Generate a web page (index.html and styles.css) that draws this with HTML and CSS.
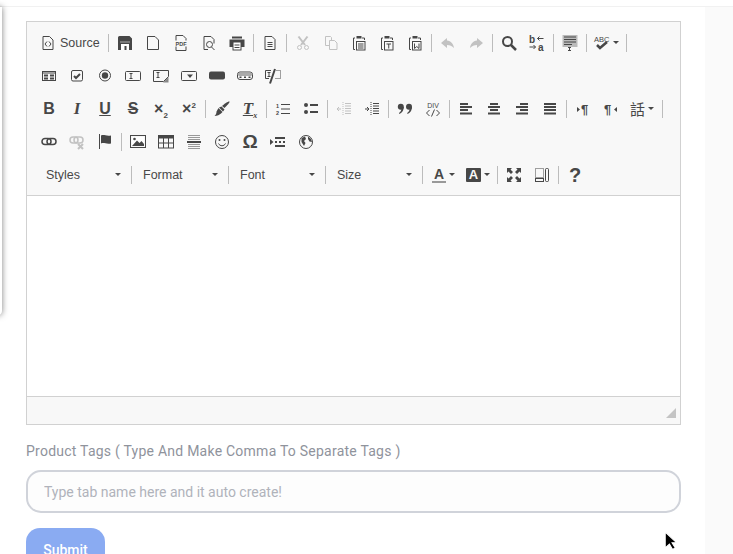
FILE: index.html
```html
<!DOCTYPE html>
<html lang="en">
<head>
  <meta charset="UTF-8">
  <meta name="viewport" content="width=device-width, initial-scale=1.0">
  <title>Add Product</title>
  <link rel="stylesheet" href="styles.css">
</head>
<body>
  <div class="topbar"></div>
  <div class="side-panel"></div>
  <div class="page">
    <main class="content">
      <div class="editor">
        <div class="toolbar">
          <!-- document / clipboard row -->
          <div class="row">
            <span class="btn source">
              <svg class="ic" viewBox="0 0 16 16"><path class="ln" d="M3 1.500h6.500l3.500 3.500v9.500h-10z"/><path class="ln" d="M7 6.500 5 9l2 2.500M9 6.500 11 9l-2 2.500"/></svg>
              <span class="source-label">Source</span>
            </span>
            <i class="sep"></i>
            <span class="btn"><svg class="ic" viewBox="0 0 16 16"><path d="M2.500 1h10l2.500 2.500V15H1V2.500A1.500 1.500 0 0 1 2.500 1z"/><rect x="3" y="6.500" width="10" height="1" fill="#aaa"/><rect x="4" y="9" width="8" height="6" fill="#fff"/><rect x="7.500" y="11" width="2" height="4"/></svg></span>
            <span class="btn"><svg class="ic" viewBox="0 0 16 16"><path class="ln" d="M2.500 1.500h7.500l3.500 3.500v9.500h-11z"/></svg></span>
            <span class="btn"><svg class="ic" viewBox="0 0 16 16"><path class="ln" d="M3 .5h7l3 3v12h-10z"/><rect x="0" y="5.500" width="16" height="6" fill="#f8f8f8"/><text class="tiny" x="8" y="10.500" text-anchor="middle">PDF</text></svg></span>
            <span class="btn"><svg class="ic" viewBox="0 0 16 16"><path class="ln" d="M7 14.500H3v-13h7l3 3v4"/><circle class="ln" cx="8.500" cy="9.500" r="3"/><path class="ln" d="m10.500 12 3 3"/></svg></span>
            <span class="btn"><svg class="ic" viewBox="0 0 16 16"><rect x="3" y="1.500" width="10" height="2"/><rect x="0.500" y="4.500" width="15" height="7.500"/><rect x="4" y="7" width="8" height="8" fill="#fff" stroke="#474747"/><path class="ln" d="M5.500 10h5M5.500 12.500h5"/></svg></span>
            <i class="sep"></i>
            <span class="btn"><svg class="ic" viewBox="0 0 16 16"><path class="ln" d="M3 1.500h7l3 3v10h-10z"/><path class="ln" d="M5.500 7.500h5M5.500 9.500h5M5.500 11.500h5"/></svg></span>
            <i class="sep"></i>
            <span class="btn off"><svg class="ic" viewBox="0 0 16 16"><path class="ln thick" d="M3.500 1.500 10 10M12.500 1.500 6 10"/><circle class="ln" cx="4.500" cy="12.500" r="2"/><circle class="ln" cx="11.500" cy="12.500" r="2"/></svg></span>
            <span class="btn off"><svg class="ic" viewBox="0 0 16 16"><path class="ln" d="M6.500 10.500h-4v-9h5l1 1v3"/><path class="ln" d="M6.500 5.500h5l2.500 2.500v6.500h-7.500z"/></svg></span>
            <span class="btn"><svg class="ic" viewBox="0 0 16 16"><path class="ln" d="M4 3H2.500v11.500H4"/><path class="ln" d="M11 3h2.500v2"/><rect x="5.500" y="1" width="5" height="2.500"/><rect class="ln" x="5.500" y="6.500" width="8.500" height="8.500"/><path class="ln" d="M7 9h5.500M7 11h5.500M7 13h5.500"/></svg></span>
            <span class="btn"><svg class="ic" viewBox="0 0 16 16"><path class="ln" d="M4 3H2.500v11.500H4"/><path class="ln" d="M11 3h2.500v2"/><rect x="5.500" y="1" width="5" height="2.500"/><rect class="ln" x="5.500" y="6.500" width="8.500" height="8.500"/><path class="ln" d="M7.500 9h4.500M9.750 9v4.500"/></svg></span>
            <span class="btn"><svg class="ic" viewBox="0 0 16 16"><path class="ln" d="M4 3H2.500v11.500H4"/><path class="ln" d="M11 3h2.500v2"/><rect x="5.500" y="1" width="5" height="2.500"/><rect class="ln" x="5.500" y="6.500" width="8.500" height="8.500"/><path class="ln" d="M7.500 8.500v5l2.250-2 2.250 2v-5"/></svg></span>
            <i class="sep"></i>
            <span class="btn off"><svg class="ic" viewBox="0 0 16 16"><path d="M7 3 1 8l6 5v-3c3 0 5 1 7 3-.5-4-3-7-7-7.500z"/></svg></span>
            <span class="btn off"><svg class="ic" viewBox="0 0 16 16"><path d="m9 3 6 5-6 5v-3c-3 0-5 1-7 3 .5-4 3-7 7-7.500z"/></svg></span>
            <i class="sep"></i>
            <span class="btn"><svg class="ic" viewBox="0 0 16 16"><circle class="ln thick" cx="6.500" cy="6.500" r="4.500"/><path class="ln fat" d="m10 10 5 5"/></svg></span>
            <span class="btn"><svg class="ic" viewBox="0 0 16 16"><text class="tiny big" x="0" y="8">b</text><text class="tiny big" x="9" y="15.500">a</text><path class="ln" d="M14.500 3.500H8.500M10.500 1.500l-2 2 2 2M.5 12h6M4.500 10l2 2-2 2"/></svg></span>
            <i class="sep"></i>
            <span class="btn"><svg class="ic" viewBox="0 0 16 16"><rect x="0.500" y="0" width="15" height="12" fill="#bbb"/><path class="ln" d="M2 2h12M2 4.500h12M2 7h12M2 9.500h8"/><path class="ln" d="M6 12.500h3M7.500 12.500v3M6 15.500h3"/></svg></span>
            <i class="sep"></i>
            <span class="btn wide">
              <svg class="ic" viewBox="0 0 16 16"><text class="tiny abc" x="0" y="7">ABC</text><path class="ln fat" d="m3 10 3 3 7-6"/></svg>
              <i class="caret"></i>
            </span>
            <i class="sep"></i>
          </div>

          <!-- form fields row -->
          <div class="row">
            <span class="btn"><svg class="ic" viewBox="0 0 16 16"><rect class="ln" x="1.500" y="3.500" width="13" height="9"/><path class="ln" d="M1.500 5h13"/><path class="ln thick" d="M3 7.500h4M9 7.500h4M3 10.500h4M9 10.500h4"/></svg></span>
            <span class="btn"><svg class="ic" viewBox="0 0 16 16"><rect class="ln" x="2.500" y="2.500" width="11" height="10.500" rx="1.500"/><path class="ln thick" d="m5 8 2 2 4-4"/></svg></span>
            <span class="btn"><svg class="ic" viewBox="0 0 16 16"><circle class="ln" cx="8" cy="7.500" r="5.500"/><circle cx="8" cy="7.500" r="3.200"/></svg></span>
            <span class="btn"><svg class="ic" viewBox="0 0 16 16"><rect class="ln" x="0.500" y="3.500" width="15" height="9" rx="1"/><path class="ln" d="M4.500 5.500h3M6 5.500v5M4.500 10.500h3"/></svg></span>
            <span class="btn"><svg class="ic" viewBox="0 0 16 16"><path class="ln" d="M.5 2.500h15v6l-5 5H.5z"/><path class="ln" d="M3.500 4.500h3M5 4.500v5M3.500 9.500h3"/><path class="hatch" d="M15.500 9v5.500H10z"/></svg></span>
            <span class="btn"><svg class="ic" viewBox="0 0 16 16"><rect class="ln" x="0.500" y="3.500" width="15" height="9" rx="1"/><path d="M6 6.500h6L9 10z"/></svg></span>
            <span class="btn"><svg class="ic" viewBox="0 0 16 16"><rect x="0" y="3.500" width="16" height="8" rx="2"/></svg></span>
            <span class="btn"><svg class="ic" viewBox="0 0 16 16"><rect class="ln" x="0.500" y="4" width="15" height="7.500" rx="2.500"/><rect x="1" y="4.500" width="14" height="3.500" rx="1.500" fill="#aaa"/><path class="ln thick" d="M3.500 8.500v1.500M8 8.500v1.500M12.500 8.500v1.500"/></svg></span>
            <span class="btn"><svg class="ic" viewBox="0 0 16 16"><path class="ln" d="M6 2.500H.5v8H4"/><path class="ln" d="M2.500 4.500h3M4 4.500v4M2.500 8.500h3"/><path class="ln thick" d="M10 1 5 15.500"/><path class="dots" d="M11.500 2.500h4v8h-5"/></svg></span>
          </div>

          <!-- text formatting row -->
          <div class="row">
            <span class="btn"><span class="gl bold">B</span></span>
            <span class="btn"><span class="gl serif-it">I</span></span>
            <span class="btn"><span class="gl bold under">U</span></span>
            <span class="btn"><span class="gl bold strike">S</span></span>
            <span class="btn"><span class="gl bold small">×<sub>2</sub></span></span>
            <span class="btn"><span class="gl bold small">×<sup>2</sup></span></span>
            <i class="sep"></i>
            <span class="btn"><svg class="ic" viewBox="0 0 16 16"><path d="M15.500.5c.5 1-2.500 4-5 6.500L8 5c2.500-2.500 6.500-5 7.500-4.500z"/><path d="M7.500 5.500 10.500 8.500 9 10.500 5 6.500z"/><path d="M4.500 7 8.500 11 7 12.500c-1 1-4 2.500-6.500 2.500 1.500-1 2-3 2-4.500z"/></svg></span>
            <span class="btn"><span class="gl serif-it under tx">T<sub>x</sub></span></span>
            <i class="sep"></i>
            <span class="btn"><svg class="ic" viewBox="0 0 16 16"><path class="ln" d="M6 3.500h9M6 8h9M6 12.500h9"/><text class="tiny" x="1" y="6.500">1</text><text class="tiny" x="1" y="14">2</text></svg></span>
            <span class="btn"><svg class="ic" viewBox="0 0 16 16"><circle cx="3" cy="4" r="2"/><circle cx="3" cy="11" r="2"/><path class="ln thick" d="M7 4h8M7 11h8"/></svg></span>
            <i class="sep"></i>
            <span class="btn off"><svg class="ic" viewBox="0 0 16 16"><path class="ln" d="M9 2.500h6M9 5h6M9 7.500h6M9 10h6M9 12.500h6"/><path class="dots" d="M7 1v14"/><path class="ln" d="M1 8h4M3 6 1 8l2 2"/></svg></span>
            <span class="btn"><svg class="ic" viewBox="0 0 16 16"><path class="ln" d="M9 2.500h6M9 5h6M9 7.500h6M9 10h6M9 12.500h6"/><path class="dots" d="M7 1v14"/><path class="ln" d="M1 8h4M3 6l2 2-2 2"/></svg></span>
            <i class="sep"></i>
            <span class="btn"><svg class="ic" viewBox="0 0 16 16"><circle cx="3.800" cy="5.800" r="3"/><path d="M6.800 5.800c0 3.500-2 6.500-4.500 7.200l-.3-1c1.700-1 2.500-3 2.500-5z"/><circle cx="12" cy="5.800" r="3"/><path d="M15 5.800c0 3.500-2 6.500-4.500 7.200l-.3-1c1.700-1 2.500-3 2.500-5z"/></svg></span>
            <span class="btn"><svg class="ic" viewBox="0 0 16 16"><text class="tiny div" x="8" y="6.500" text-anchor="middle">DIV</text><path class="ln" d="M4.500 9 1.500 12l3 3M11.500 9l3 3-3 3M9.500 8.500l-3 7"/></svg></span>
            <i class="sep"></i>
            <span class="btn"><svg class="ic" viewBox="0 0 16 16"><path class="ln thick" d="M2 3h8M2 6h12M2 9h8M2 12.500h12"/></svg></span>
            <span class="btn"><svg class="ic" viewBox="0 0 16 16"><path class="ln thick" d="M4 3h8M2 6h12M4 9h8M2 12.500h12"/></svg></span>
            <span class="btn"><svg class="ic" viewBox="0 0 16 16"><path class="ln thick" d="M6 3h8M2 6h12M6 9h8M2 12.500h12"/></svg></span>
            <span class="btn"><svg class="ic" viewBox="0 0 16 16"><path class="ln thick" d="M2 3h12M2 6h12M2 9h12M2 12.500h12"/></svg></span>
            <i class="sep"></i>
            <span class="btn"><svg class="ic" viewBox="0 0 16 16"><path d="M2 6v5l3-2.500z"/><text class="para" x="6" y="13">¶</text></svg></span>
            <span class="btn"><svg class="ic" viewBox="0 0 16 16"><text class="para" x="1" y="13">¶</text><path d="M14 6v5l-3-2.500z"/></svg></span>
            <span class="btn wide lang">
              <span class="gl cjk">話</span>
              <i class="caret"></i>
            </span>
            <i class="sep"></i>
          </div>

          <!-- insert row -->
          <div class="row">
            <span class="btn"><svg class="ic" viewBox="0 0 16 16"><rect class="ln mid" x="1" y="4.500" width="9" height="6" rx="3"/><rect class="ln mid" x="6" y="4.500" width="9" height="6" rx="3"/></svg></span>
            <span class="btn off"><svg class="ic" viewBox="0 0 16 16"><rect class="ln mid" x="1" y="3" width="8" height="6" rx="3"/><rect class="ln mid" x="5" y="3" width="9" height="6" rx="3"/><path class="ln thick" d="m9 10 5 5M14 10l-5 5"/></svg></span>
            <span class="btn"><svg class="ic" viewBox="0 0 16 16"><path class="ln" d="M2.500 0v15"/><path d="M4 1.500c3-1.500 5 1 10 0v8c-5 1-7-1.500-10 0z"/></svg></span>
            <i class="sep"></i>
            <span class="btn"><svg class="ic" viewBox="0 0 16 16"><rect class="ln" x="0.500" y="1.500" width="15" height="12"/><rect x="2" y="3" width="12" height="9" fill="#fff"/><circle cx="4.500" cy="5" r="1.300"/><path d="M2 12 7 6.500l2.500 2.500 2-2 2.500 3v2z"/></svg></span>
            <span class="btn"><svg class="ic" viewBox="0 0 16 16"><rect x="0" y="1" width="16" height="3.500"/><rect class="ln" x="0.500" y="1.500" width="15" height="12.500"/><path class="ln" d="M.5 9h15M5.500 4v10M10.500 4v10"/></svg></span>
            <span class="btn"><svg class="ic" viewBox="0 0 16 16"><path class="ln gray" d="M2 1.500h12M2 3.500h12M2 5.500h12M2 10.500h12M2 12.500h12M2 14.500h12"/><path class="ln thick" d="M1 8h14"/></svg></span>
            <span class="btn"><svg class="ic" viewBox="0 0 16 16"><circle class="ln" cx="8" cy="8" r="6.500"/><circle cx="5.500" cy="6" r="1"/><circle cx="10.500" cy="6" r="1"/><path class="ln" d="M4.500 9.500c1.500 3 5.500 3 7 0"/></svg></span>
            <span class="btn"><span class="gl bold omega">Ω</span></span>
            <span class="btn"><svg class="ic" viewBox="0 0 16 16"><path d="M0 5v6l3.500-3z"/><path class="ln thick" d="M5 4h10M5 12h10"/><path class="ln thick" d="M5 8h2M9 8h2M13 8h2"/></svg></span>
            <span class="btn"><svg class="ic" viewBox="0 0 16 16"><circle class="ln" cx="8" cy="8" r="6.500"/><path d="M3.500 4 7 2.500 8 5 6 7l1.500 2L6 12 3.500 8zM10 2.500 13 5l1 3-2.500-.5L10 5z"/></svg></span>
          </div>

          <!-- styles row -->
          <div class="row">
            <span class="combo">Styles<i class="caret"></i></span>
            <span class="combo">Format<i class="caret"></i></span>
            <span class="combo">Font<i class="caret"></i></span>
            <span class="combo">Size<i class="caret"></i></span>
            <span class="btn wide color">
              <span class="gl bold color-a">A</span>
              <i class="caret"></i>
            </span>
            <span class="btn wide color">
              <span class="gl bold color-bg">A</span>
              <i class="caret"></i>
            </span>
            <i class="sep"></i>
            <span class="btn"><svg class="ic" viewBox="0 0 16 16"><path d="M1 1h5L4.500 2.500 7 5 5 7 2.500 4.500 1 6zM15 1v5l-1.500-1.500L11 7 9 5l2.500-2.500L10 1zM1 15v-5l1.500 1.500L5 9l2 2-2.500 2.500L6 15zM15 15h-5l1.500-1.500L9 11l2-2 2.500 2.500L15 10z"/></svg></span>
            <span class="btn"><svg class="ic" viewBox="0 0 16 16"><path class="dots" d="M1.500 1.500h8v9h-8z"/><rect class="ln" x="1.500" y="11.500" width="8" height="3"/><rect class="ln" x="11.500" y="1.500" width="3" height="13" rx="1"/></svg></span>
            <i class="sep"></i>
            <span class="btn"><span class="gl bold help">?</span></span>
          </div>
        </div>
        <div class="editor-body"></div>
        <div class="editor-foot"><i class="resizer"></i></div>
      </div>

      <form class="tags-form">
        <label class="tags-label" for="tags">Product Tags ( Type And Make Comma To Separate Tags )</label>
        <input class="tags-input" id="tags" type="text" placeholder="Type tab name here and it auto create!">
        <button class="submit" type="button">Submit</button>
      </form>
    </main>
    <aside class="right-rail"></aside>
  </div>

  <svg class="cursor" viewBox="0 0 13 19"><path d="M1 1v15l4-3.500 3 5 2.500-1.500-3-4.800H12z" fill="#000" stroke="#fff" stroke-width="1"/></svg>
</body>
</html>
```

FILE: styles.css
```css
html, body {
  height: 100%;
  overflow: hidden;
}
body {
  margin: 0;
  background: #fff;
  font-family: "Liberation Sans", Arial, sans-serif;
}
.topbar {
  height: 6px;
  border-bottom: 1px solid #f1f1f1;
}
.side-panel {
  position: absolute;
  left: -8px;
  top: 7px;
  width: 10px;
  height: 308px;
  border-radius: 0 0 4px 0;
  background: #fff;
  box-shadow: 0 0 6px rgba(0, 0, 0, 0.5);
}
.page {
  display: flex;
}
.content {
  width: 655px;
  padding: 14px 24px 0 26px;
}
.right-rail {
  flex: 1;
  height: 547px;
  background: #fafafa;
}

/* editor */
.editor {
  border: 1px solid #d1d1d1;
}
.toolbar {
  padding: 4px 0 4px 8px;
  background: #f8f8f8;
  border-bottom: 1px solid #d1d1d1;
}
.row {
  display: flex;
  align-items: center;
  height: 33px;
}
.btn {
  display: flex;
  align-items: center;
  justify-content: center;
  flex: none;
  width: 28px;
  height: 24px;
}
.btn.wide {
  width: 35px;
  gap: 3px;
}
.btn.off {
  opacity: 0.3;
}
.btn.source {
  width: 71px;
  justify-content: flex-start;
  padding-left: 5px;
  box-sizing: border-box;
  gap: 4px;
}
.source-label {
  font-size: 12.5px;
  color: #484848;
}
.sep {
  flex: none;
  width: 1px;
  height: 18px;
  margin: 0 2px;
  background: #bcbcbc;
}
.caret {
  flex: none;
  width: 0;
  height: 0;
  border: 3px solid transparent;
  border-top-color: #474747;
  border-bottom: 0;
}
.ic {
  flex: none;
  width: 16px;
  height: 16px;
  fill: #474747;
  overflow: visible;
}
.ln {
  fill: none;
  stroke: #474747;
  stroke-width: 1;
}
.ln.mid {
  stroke-width: 1.5;
}
.ln.thick {
  stroke-width: 2;
}
.ln.fat {
  stroke-width: 2.5;
}
.ln.gray {
  stroke: #999;
}
.dots {
  fill: none;
  stroke: #474747;
  stroke-width: 1;
  stroke-dasharray: 1 1;
}
.hatch {
  fill: #888;
}
.tiny {
  font: bold 5.5px "Liberation Sans", sans-serif;
  fill: #474747;
}
.tiny.big {
  font-size: 10px;
}
.tiny.abc {
  font-size: 7.5px;
  font-weight: normal;
}
.tiny.div {
  font-size: 7px;
  font-weight: normal;
}
.para {
  font: bold 13px "Liberation Sans", sans-serif;
  fill: #474747;
}
.gl {
  color: #474747;
  font-size: 16px;
  line-height: 16px;
}
.gl sub, .gl sup {
  font-size: 8px;
  line-height: 0;
}
.bold {
  font-weight: bold;
}
.small {
  font-size: 16px;
}
.under {
  text-decoration: underline;
}
.strike {
  text-decoration: line-through;
}
.serif-it {
  font-family: "Liberation Serif", serif;
  font-style: italic;
  font-weight: bold;
  font-size: 17px;
}
.omega {
  font-size: 19px;
}
.help {
  font-size: 20px;
}
.cjk {
  font-family: "Noto Sans CJK TC", sans-serif;
  font-size: 15px;
}
.lang {
  justify-content: flex-start;
  padding-left: 5px;
  box-sizing: border-box;
}
.combo {
  display: flex;
  align-items: center;
  justify-content: space-between;
  flex: none;
  box-sizing: border-box;
  width: 97px;
  height: 18px;
  padding: 0 10px 0 11px;
  border-right: 1px solid #bcbcbc;
  font-size: 12.5px;
  color: #484848;
}
.color {
  margin-left: 3px;
}
.color + .color {
  width: 34px;
  margin-left: 0;
}
.color-a {
  border-bottom: 2px solid #999;
  font-size: 14px;
  line-height: 14px;
  padding: 0 2px;
}
.color-bg {
  background: #474747;
  color: #f8f8f8;
  font-size: 13px;
  line-height: 14px;
  padding: 0 3px;
  border-radius: 1px;
}
.editor-body {
  height: 200px;
  background: #fff;
}
.editor-foot {
  display: flex;
  justify-content: flex-end;
  align-items: flex-end;
  height: 28px;
  padding: 0 4px 6px 0;
  box-sizing: border-box;
  border-top: 1px solid #d1d1d1;
  background: #f8f8f8;
}
.resizer {
  width: 0;
  height: 0;
  border-style: solid;
  border-width: 0 0 10px 10px;
  border-color: transparent transparent #c4c4c4 transparent;
}

/* tags form */
.tags-form {
  display: flex;
  flex-direction: column;
  align-items: flex-start;
  margin-top: 17px;
}
.tags-label {
  font-family: Roboto, sans-serif;
  font-size: 14px;
  line-height: 18px;
  letter-spacing: 0.24px;
  color: #8f939c;
}
.tags-input {
  box-sizing: border-box;
  width: 655px;
  height: 43px;
  margin-top: 10px;
  padding: 0 16px;
  border: 2px solid #d0d3da;
  border-radius: 15px;
  background: #fdfdfd;
  font-family: Roboto, sans-serif;
  font-size: 14px;
  outline: none;
}
.tags-input::placeholder {
  color: #b0b3bb;
  opacity: 1;
}
.submit {
  width: 79px;
  height: 44px;
  margin-top: 15px;
  border: 0;
  border-radius: 14px;
  background: #8aabf2;
  color: #fff;
  font-family: Roboto, sans-serif;
  font-size: 14px;
  font-weight: 500;
  cursor: pointer;
}
.cursor {
  position: absolute;
  left: 664px;
  top: 531px;
  width: 14px;
  height: 20px;
}
```
